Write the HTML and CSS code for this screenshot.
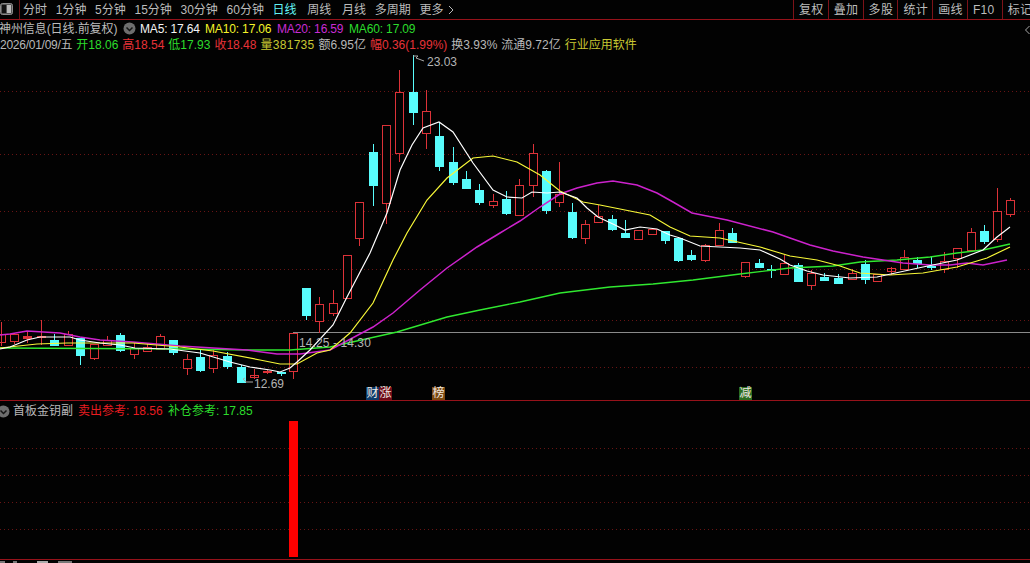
FILE: index.html
```html
<!DOCTYPE html>
<html lang="zh-CN">
<head>
<meta charset="utf-8">
<title>神州信息 日线</title>
<link rel="stylesheet" href="styles.css">
</head>
<body>
<div class="screen">
  <header class="toolbar">
    <div class="toggle">
      <svg class="toggle-icon" width="13" height="12" viewBox="0 0 13 12"><rect x="0.5" y="0.5" width="12" height="11" rx="2" fill="#555" stroke="#8a8a8a"/><rect x="2" y="2" width="4" height="8" fill="#111"/><rect x="7" y="2" width="4" height="8" fill="#bbb"/></svg>
    </div>
    <nav class="tabs">
      <span class="tab">分时</span>
      <span class="tab">1分钟</span>
      <span class="tab">5分钟</span>
      <span class="tab">15分钟</span>
      <span class="tab">30分钟</span>
      <span class="tab">60分钟</span>
      <span class="tab tab-on">日线</span>
      <span class="tab tab-wide">周线</span>
      <span class="tab tab-wide">月线</span>
      <span class="tab">多周期</span>
      <span class="tab">更多 <svg class="more" width="6" height="10" viewBox="0 0 6 10"><path d="M1 1l4 4-4 4" fill="none" stroke="#b8b8b8"/></svg></span>
    </nav>
    <div class="tools">
      <span class="tool">复权</span>
      <span class="tool">叠加</span>
      <span class="tool">多股</span>
      <span class="tool">统计</span>
      <span class="tool">画线</span>
      <span class="tool">F10</span>
      <span class="tool">标记</span>
    </div>
  </header>

  <section class="main-panel">
    <svg class="chart" width="1030" height="380" viewBox="0 20 1030 380">
      <g class="grid">
        <path d="M0 91.5H1030M0 154.5H1030M0 211.5H1030M0 269.5H1030M0 320.5H1030M0 367.5H1030"/>
      </g>
      <path class="range" d="M293 332.5H1030"/>
      <g class="red">
        <path d="M-2.5 334.5h8v8h-8zM1.5 322v24"/>
        <path d="M10.5 334.5h8v7h-8zM14.5 341v3"/>
        <path class="solid" d="M23.5 336.5h8v2h-8zM27.5 332v11"/>
        <path d="M37.5 336.5h8v1h-8zM41.5 320v25"/>
        <path d="M64.5 334.5h8v11h-8zM68.5 331v3"/>
        <path d="M90.5 344.5h8v14h-8zM94.5 358v2"/>
        <path d="M103.5 340.5h8v5h-8zM107.5 336v4"/>
        <path d="M130.5 348.5h8v6h-8zM134.5 343v5M134.5 354v5"/>
        <path d="M143.5 347.5h8v4h-8zM147.5 343v4"/>
        <path d="M156.5 336.5h8v13h-8zM160.5 334v2"/>
        <path d="M183.5 359.5h8v9h-8zM187.5 354v5M187.5 368v7"/>
        <path d="M209.5 355.5h8v13h-8zM213.5 350v5M213.5 368v5"/>
        <path d="M250.5 375.5h8v2h-8zM254.5 369v10"/>
        <path d="M263.5 371.5h8v1h-8zM267.5 369v5"/>
        <path d="M289.5 333.5h8v38h-8zM293.5 371v8"/>
        <path d="M315.5 304.5h8v17h-8zM319.5 297v7M319.5 321v12"/>
        <path d="M329.5 303.5h8v10h-8zM333.5 290v13M333.5 313v3"/>
        <path d="M343.5 255.5h8v43h-8z"/>
        <path d="M355.5 202.5h8v36h-8zM359.5 238v8"/>
        <path d="M382.5 125.5h8v78h-8zM386.5 203v21"/>
        <path d="M395.5 92.5h8v61h-8zM399.5 70v22M399.5 153v9"/>
        <path d="M422.5 111.5h8v22h-8zM426.5 90v21M426.5 133v16"/>
        <path d="M489.5 201.5h8v4h-8zM493.5 194v7M493.5 205v3"/>
        <path d="M515.5 185.5h8v30h-8zM519.5 179v6"/>
        <path d="M529.5 153.5h8v32h-8zM533.5 144v9M533.5 185v12"/>
        <path d="M555.5 194.5h8v8h-8zM559.5 162v32M559.5 202v5"/>
        <path d="M581.5 224.5h8v14h-8zM585.5 220v4M585.5 238v6"/>
        <path d="M594.5 216.5h8v6h-8zM598.5 205v11"/>
        <path d="M634.5 230.5h8v9h-8z"/>
        <path d="M648.5 229.5h8v5h-8z"/>
        <path d="M701.5 245.5h8v15h-8zM705.5 244v1M705.5 260v2"/>
        <path d="M715.5 230.5h8v15h-8zM719.5 223v7"/>
        <path d="M741.5 262.5h8v14h-8zM745.5 276v2"/>
        <path d="M780.5 263.5h8v11h-8zM784.5 255v8"/>
        <path d="M807.5 273.5h8v12h-8zM811.5 270v3M811.5 285v5"/>
        <path d="M848.5 273.5h8v6h-8zM852.5 269v4"/>
        <path d="M873.5 274.5h8v7h-8z"/>
        <path d="M887.5 268.5h8v3h-8zM891.5 267v8"/>
        <path d="M900.5 257.5h8v12h-8zM904.5 250v7"/>
        <path d="M940.5 261.5h8v8h-8zM944.5 252v9M944.5 269v4"/>
        <path d="M953.5 248.5h8v10h-8zM957.5 258v10"/>
        <path d="M967.5 232.5h8v18h-8zM971.5 228v4"/>
        <path d="M993.5 211.5h8v28h-8zM997.5 188v23M997.5 239v3"/>
        <path d="M1006.5 200.5h8v14h-8zM1010.5 198v2M1010.5 214v3"/>
      </g>
      <g class="cyan">
        <path d="M50.5 340.5h8v5h-8zM54.5 334v12"/>
        <path d="M76.5 338.5h8v17h-8zM80.5 355v10"/>
        <path d="M116.5 335.5h8v15h-8zM120.5 333v19"/>
        <path d="M169.5 340.5h8v12h-8zM173.5 352v3"/>
        <path d="M196.5 357.5h8v13h-8zM200.5 350v22"/>
        <path d="M223.5 356.5h8v10h-8zM227.5 352v17"/>
        <path d="M237.5 367.5h8v15h-8zM241.5 365v3"/>
        <path d="M277.5 372.5h8v1h-8zM281.5 373v3"/>
        <path d="M302.5 288.5h8v27h-8zM306.5 315v5"/>
        <path d="M369.5 152.5h8v33h-8zM373.5 144v62"/>
        <path d="M409.5 92.5h8v20h-8zM413.5 55v70"/>
        <path d="M435.5 136.5h8v30h-8zM439.5 122v49"/>
        <path d="M449.5 162.5h8v20h-8zM453.5 147v38"/>
        <path d="M462.5 179.5h8v9h-8zM466.5 171v18"/>
        <path d="M475.5 190.5h8v12h-8zM479.5 184v21"/>
        <path d="M502.5 199.5h8v14h-8zM506.5 191v24"/>
        <path d="M542.5 171.5h8v39h-8zM546.5 170v44"/>
        <path d="M568.5 212.5h8v25h-8zM572.5 203v36"/>
        <path d="M608.5 219.5h8v10h-8zM612.5 215v16"/>
        <path d="M621.5 233.5h8v4h-8zM625.5 220v18"/>
        <path d="M661.5 231.5h8v9h-8zM665.5 240v4"/>
        <path d="M674.5 238.5h8v22h-8zM678.5 260v2"/>
        <path d="M687.5 255.5h8v4h-8zM691.5 250v11"/>
        <path d="M728.5 233.5h8v9h-8zM732.5 228v15"/>
        <path d="M755.5 263.5h8v4h-8zM759.5 259v9"/>
        <path d="M767.5 269.5h8v1h-8zM771.5 265v13"/>
        <path d="M794.5 265.5h8v16h-8zM798.5 263v2"/>
        <path d="M820.5 277.5h8v3h-8zM824.5 273v4"/>
        <path d="M834.5 278.5h8v5h-8zM838.5 274v10"/>
        <path d="M861.5 264.5h8v15h-8zM865.5 260v24"/>
        <path d="M913.5 260.5h8v3h-8zM917.5 257v11"/>
        <path d="M927.5 266.5h8v1h-8zM931.5 257v13"/>
        <path d="M980.5 231.5h8v10h-8zM984.5 225v19"/>
      </g>
      <polyline class="ma ma60" points="0,348 180,349 250,350 290,350 330,347 397,332 447,317 480,310 520,302 560,293 610,287 653,284 693,280 740,274 790,268 833,266 860,262 897,260 930,257 957,253 983,250 1010,244"/>
      <polyline class="ma ma20" points="0,335 10,334 27,331 60,333 80,337 100,340 133,342 180,346 247,350 277,354 300,354 330,350 373,327 393,313 420,290 447,268 477,247 500,233 520,221 540,207 560,194 577,188 597,183 613,181 637,185 657,193 673,202 692,213 727,220 773,232 790,238 810,245 833,251 863,257 883,260 903,263 930,265 950,265 967,263 983,265 1007,260"/>
      <polyline class="ma ma10" points="0,348 37,344 67,343 133,343 180,347 213,351 260,360 280,364 297,364 317,353 330,350 350,333 373,303 393,260 407,233 427,200 447,178 473,158 493,156 517,162 540,175 560,191 583,202 600,205 620,209 650,215 670,227 690,236 720,238 760,247 780,253 790,256 817,260 840,266 860,273 890,275 923,273 957,267 987,258 1010,247"/>
      <polyline class="ma ma5" points="0,349 10,347 27,340 40,337 70,337 80,340 100,343 120,345 135,348 170,349 200,353 230,362 250,367 270,370 280,372 290,368 297,362 310,350 333,325 347,297 370,253 387,213 400,170 412,145 423,128 439,122 453,132 473,163 493,190 507,197 522,198 532,192 547,193 560,192 577,198 587,208 598,217 615,225 625,230 640,227 657,229 670,235 680,238 700,246 740,248 760,250 780,259 790,265 807,271 823,275 850,278 877,277 900,272 923,267 957,260 983,250 997,237 1010,227"/>
      <path class="note" d="M413 56l5 0-2 2 8 3M243 379l3 3h7M243 379l2-1"/>
      <text class="label" x="427" y="66">23.03</text>
      <text class="label" x="254" y="387.5">12.69</text>
      <text class="label label-range" x="299" y="346.5">14.25 - 14.30</text>
      <path class="note" d="M1029.5 26l-4 4 4 4"/>
    </svg>

    <div class="legend">
      <div class="row row-ma">
        <span class="name">神州信息(日线.前复权)</span>
        <svg class="chev" width="13" height="13" viewBox="0 0 13 13"><circle cx="6.5" cy="6.5" r="6" fill="#6e6e6e"/><path d="M3.5 5.5l3 3 3-3" fill="none" stroke="#151515" stroke-width="1.5"/></svg>
        <span class="w">MA5: 17.64</span>
        <span class="y">MA10: 17.06</span>
        <span class="m">MA20: 16.59</span>
        <span class="g">MA60: 17.09</span>
      </div>
      <div class="row row-quote">
        <span class="gray date">2026/01/09/五</span>
        <span class="g">开18.06</span>
        <span class="r">高18.54</span>
        <span class="g">低17.93</span>
        <span class="r">收18.48</span>
        <span class="y2 vol">量381735</span>
        <span class="gray">额6.95亿</span>
        <span class="r">幅0.36(1.99%)</span>
        <span class="gray">换3.93%</span>
        <span class="gray">流通9.72亿</span>
        <span class="y2">行业应用软件</span>
      </div>
    </div>

    <span class="badge b-blue b1">财</span>
    <span class="badge b-red b2">涨</span>
    <span class="badge b-brown b3">榜</span>
    <span class="badge b-green b4">减</span>
  </section>

  <section class="sub-panel">
    <svg class="chart" width="1030" height="158" viewBox="0 401 1030 158">
      <g class="grid"><path d="M0 448.5H1030M0 475.5H1030M0 502.5H1030M0 529.5H1030"/></g>
      <rect x="289" y="421" width="9" height="136" fill="#ff0000"/>
    </svg>
    <div class="row row-sub">
      <svg class="chev chev-sub" width="10" height="13" viewBox="3 0 10 13"><circle cx="6.5" cy="6.5" r="6" fill="#6e6e6e"/><path d="M3.5 5.5l3 3 3-3" fill="none" stroke="#151515" stroke-width="1.5"/></svg>
      <span class="gray">首板金钥副</span>
      <span class="r2">卖出参考: 18.56</span>
      <span class="g">补仓参考: 17.85</span>
    </div>
  </section>

  <footer class="footer">
    <i class="stub s1"></i><i class="stub s2"></i><i class="stub s3"></i><i class="stub s4"></i>
  </footer>
</div>
</body>
</html>
```

FILE: styles.css
```css
* { box-sizing: border-box; }
html, body { margin: 0; padding: 0; background: #020202; }
.screen {
  width: 1030px; height: 563px; overflow: hidden; background: #020202;
  display: flex; flex-direction: column;
  font: 12px/14px "Liberation Sans", "Noto Sans CJK SC", sans-serif;
  color: #c0c0c0;
}
.toolbar {
  flex: 0 0 20px; display: flex; align-items: stretch;
  border-bottom: 1px solid #96121a; color: #bcbcbc;
}
.toggle {
  width: 20px; border-right: 1px solid #6c1418; padding: 3px 0 0 0;
  display: flex; align-items: flex-start;
}
.toggle-icon { display: block; }
.tabs { display: flex; align-items: center; gap: 8.7px; padding-left: 3px; white-space: nowrap; }
.tab-on { color: #62f4f4; }
.tab-wide { margin-left: 2px; }
.more { margin-left: 1px; vertical-align: -1px; }
.tools { margin-left: auto; display: flex; width: 237px; flex: 0 0 237px; white-space: nowrap; }
.tool {
  flex: 0 0 34.8px; border-left: 1px solid #7c1218; padding-left: 5px;
  display: flex; align-items: center; letter-spacing: 0.3px;
}
.main-panel { position: relative; flex: 0 0 381px; border-bottom: 1px solid #96121a; }
.sub-panel { position: relative; flex: 0 0 159px; border-bottom: 1px solid #96121a; }
.chart { position: absolute; left: 0; top: 0; display: block; }
.grid path { fill: none; stroke: #681414; stroke-dasharray: 1 3; }
.range { fill: none; stroke: #8a8a8a; }
.red path { fill: #020202; stroke: #dc3238; shape-rendering: crispEdges; }
.red path.solid { fill: #dc3238; }
.cyan path { fill: #58fcfc; stroke: #58fcfc; shape-rendering: crispEdges; }
.ma { fill: none; stroke-width: 1.2; }
.ma5 { stroke: #ffffff; }
.ma10 { stroke: #f8f838; }
.ma20 { stroke: #cc22cc; stroke-width: 1.5; }
.ma60 { stroke: #30e830; stroke-width: 1.4; }
.note { fill: none; stroke: #a8a8a8; stroke-width: 1; }
.label { fill: #b4b4b4; font: 12px "Liberation Sans", sans-serif; }
.label-range { letter-spacing: 0.09px; }
.legend { position: relative; padding-top: 1px; }
.row { display: flex; align-items: center; white-space: nowrap; height: 15px; }
.row-ma { margin-left: -1px; letter-spacing: -0.15px; }
.row-ma .name { color: #bcbcbc; letter-spacing: -0.08px; width: 124px; }
.row-ma .chev { margin-right: 4px; }
.row-ma .w { width: 65px; }
.row-ma .y { width: 72px; }
.row-ma .m { width: 72px; }
.row-quote { margin-top: 1px; }
.row-quote span { margin-right: 4px; }
.row-quote .date { letter-spacing: -0.26px; }
.row-quote .vol { letter-spacing: 0.3px; }
.row-sub { position: relative; padding-top: 2px; height: 18px; }
.row-sub .chev-sub { margin-right: 3px; }
.row-sub .gray { width: 65px; }
.row-sub .r2 { width: 90px; }
.w { color: #f4f4f4; }
.y { color: #f4f428; }
.m { color: #c82cd4; }
.g { color: #2cdc2c; }
.r { color: #e83238; }
.r2 { color: #e81c20; }
.y2 { color: #c8c832; }
.gray { color: #b8b8b8; }
.badge {
  position: absolute; top: 367px; width: 13px; height: 13px;
  font-size: 12px; line-height: 13px; text-align: center; color: #f0e8e0;
}
.b-blue { background: #0c3c6c; }
.b-red { background: #6e0c18; }
.b-brown { background: #7c4a10; }
.b-green { background: #2c6c20; }
.b1 { left: 366px; }
.b2 { left: 379px; }
.b3 { left: 432px; }
.b4 { left: 739px; }
.footer { flex: 1; position: relative; overflow: hidden; display: flex; align-items: flex-end; }
.stub { display: block; height: 2px; background: #777; position: absolute; bottom: 0; }
.s1 { left: 0; width: 5px; }
.s2 { left: 13px; width: 4px; }
.s3 { left: 37px; width: 11px; background: #aaa; }
.s4 { left: 58px; width: 14px; }
```
